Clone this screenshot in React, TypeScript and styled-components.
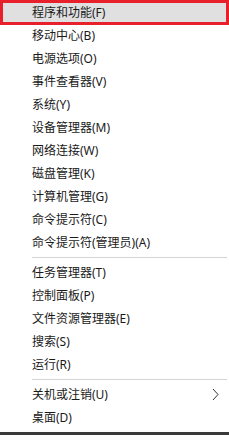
import React from "react";
import styled, { createGlobalStyle, css } from "styled-components";

const GlobalStyle = createGlobalStyle`
  html, body {
    margin: 0;
    padding: 0;
    background: #ffffff;
  }
  body {
    font-family: "Noto Sans", "Noto Sans CJK SC", sans-serif;
  }
`;

type Entry =
  | { type: "item"; label: string; active?: boolean; submenu?: boolean }
  | { type: "sep" };

const MENU: Entry[] = [
  { type: "item", label: "程序和功能(F)", active: true },
  { type: "item", label: "移动中心(B)" },
  { type: "item", label: "电源选项(O)" },
  { type: "item", label: "事件查看器(V)" },
  { type: "item", label: "系统(Y)" },
  { type: "item", label: "设备管理器(M)" },
  { type: "item", label: "网络连接(W)" },
  { type: "item", label: "磁盘管理(K)" },
  { type: "item", label: "计算机管理(G)" },
  { type: "item", label: "命令提示符(C)" },
  { type: "item", label: "命令提示符(管理员)(A)" },
  { type: "sep" },
  { type: "item", label: "任务管理器(T)" },
  { type: "item", label: "控制面板(P)" },
  { type: "item", label: "文件资源管理器(E)" },
  { type: "item", label: "搜索(S)" },
  { type: "item", label: "运行(R)" },
  { type: "sep" },
  { type: "item", label: "关机或注销(U)", submenu: true },
  { type: "item", label: "桌面(D)" },
];

export default function App() {
  return (
    <>
      <GlobalStyle />
      <Menu>
        <List>
          {MENU.map((entry, i) =>
            entry.type === "sep" ? (
              <Separator key={i} />
            ) : (
              <Item key={i} active={entry.active}>
                <Label>{entry.label}</Label>
                {entry.submenu && (
                  <Chevron width="7" height="13" viewBox="0 0 7 13">
                    <path d="M1 1 L6 6.5 L1 12" fill="none" stroke="#333" strokeWidth="1" />
                  </Chevron>
                )}
              </Item>
            )
          )}
        </List>
        <BottomEdge />
      </Menu>
    </>
  );
}

const Menu = styled.div`
  width: 229px;
  height: 435px;
  display: flex;
  flex-direction: column;
  justify-content: space-between;
  background: #ffffff;
  overflow: hidden;
`;

const List = styled.div`
  display: flex;
  flex-direction: column;
  padding-top: 1px;
`;

const Item = styled.div<{ active?: boolean }>`
  position: relative;
  height: 23px;
  display: flex;
  align-items: center;
  justify-content: space-between;
  padding: 0 10px 0 32px;
  box-sizing: border-box;

  ${(p) =>
    p.active &&
    css`
      background: #e0e0e0;
      &::after {
        content: "";
        position: absolute;
        top: -1px;
        bottom: -1px;
        left: 0;
        right: 0;
        border: 3px solid #e8202b;
      }
    `}
`;

const Label = styled.span`
  font-size: 12px;
  line-height: 23px;
  color: #1a1a1a;
  white-space: nowrap;
`;

const Chevron = styled.svg`
  display: block;
`;

const Separator = styled.div`
  height: 7px;
  margin-left: 32px;
  margin-right: 2px;
  display: flex;
  align-items: center;

  &::before {
    content: "";
    flex: 1;
    height: 1px;
    background: #d4d4d4;
  }
`;

const BottomEdge = styled.div`
  height: 3px;
  background: #3a3a3a;
`;
